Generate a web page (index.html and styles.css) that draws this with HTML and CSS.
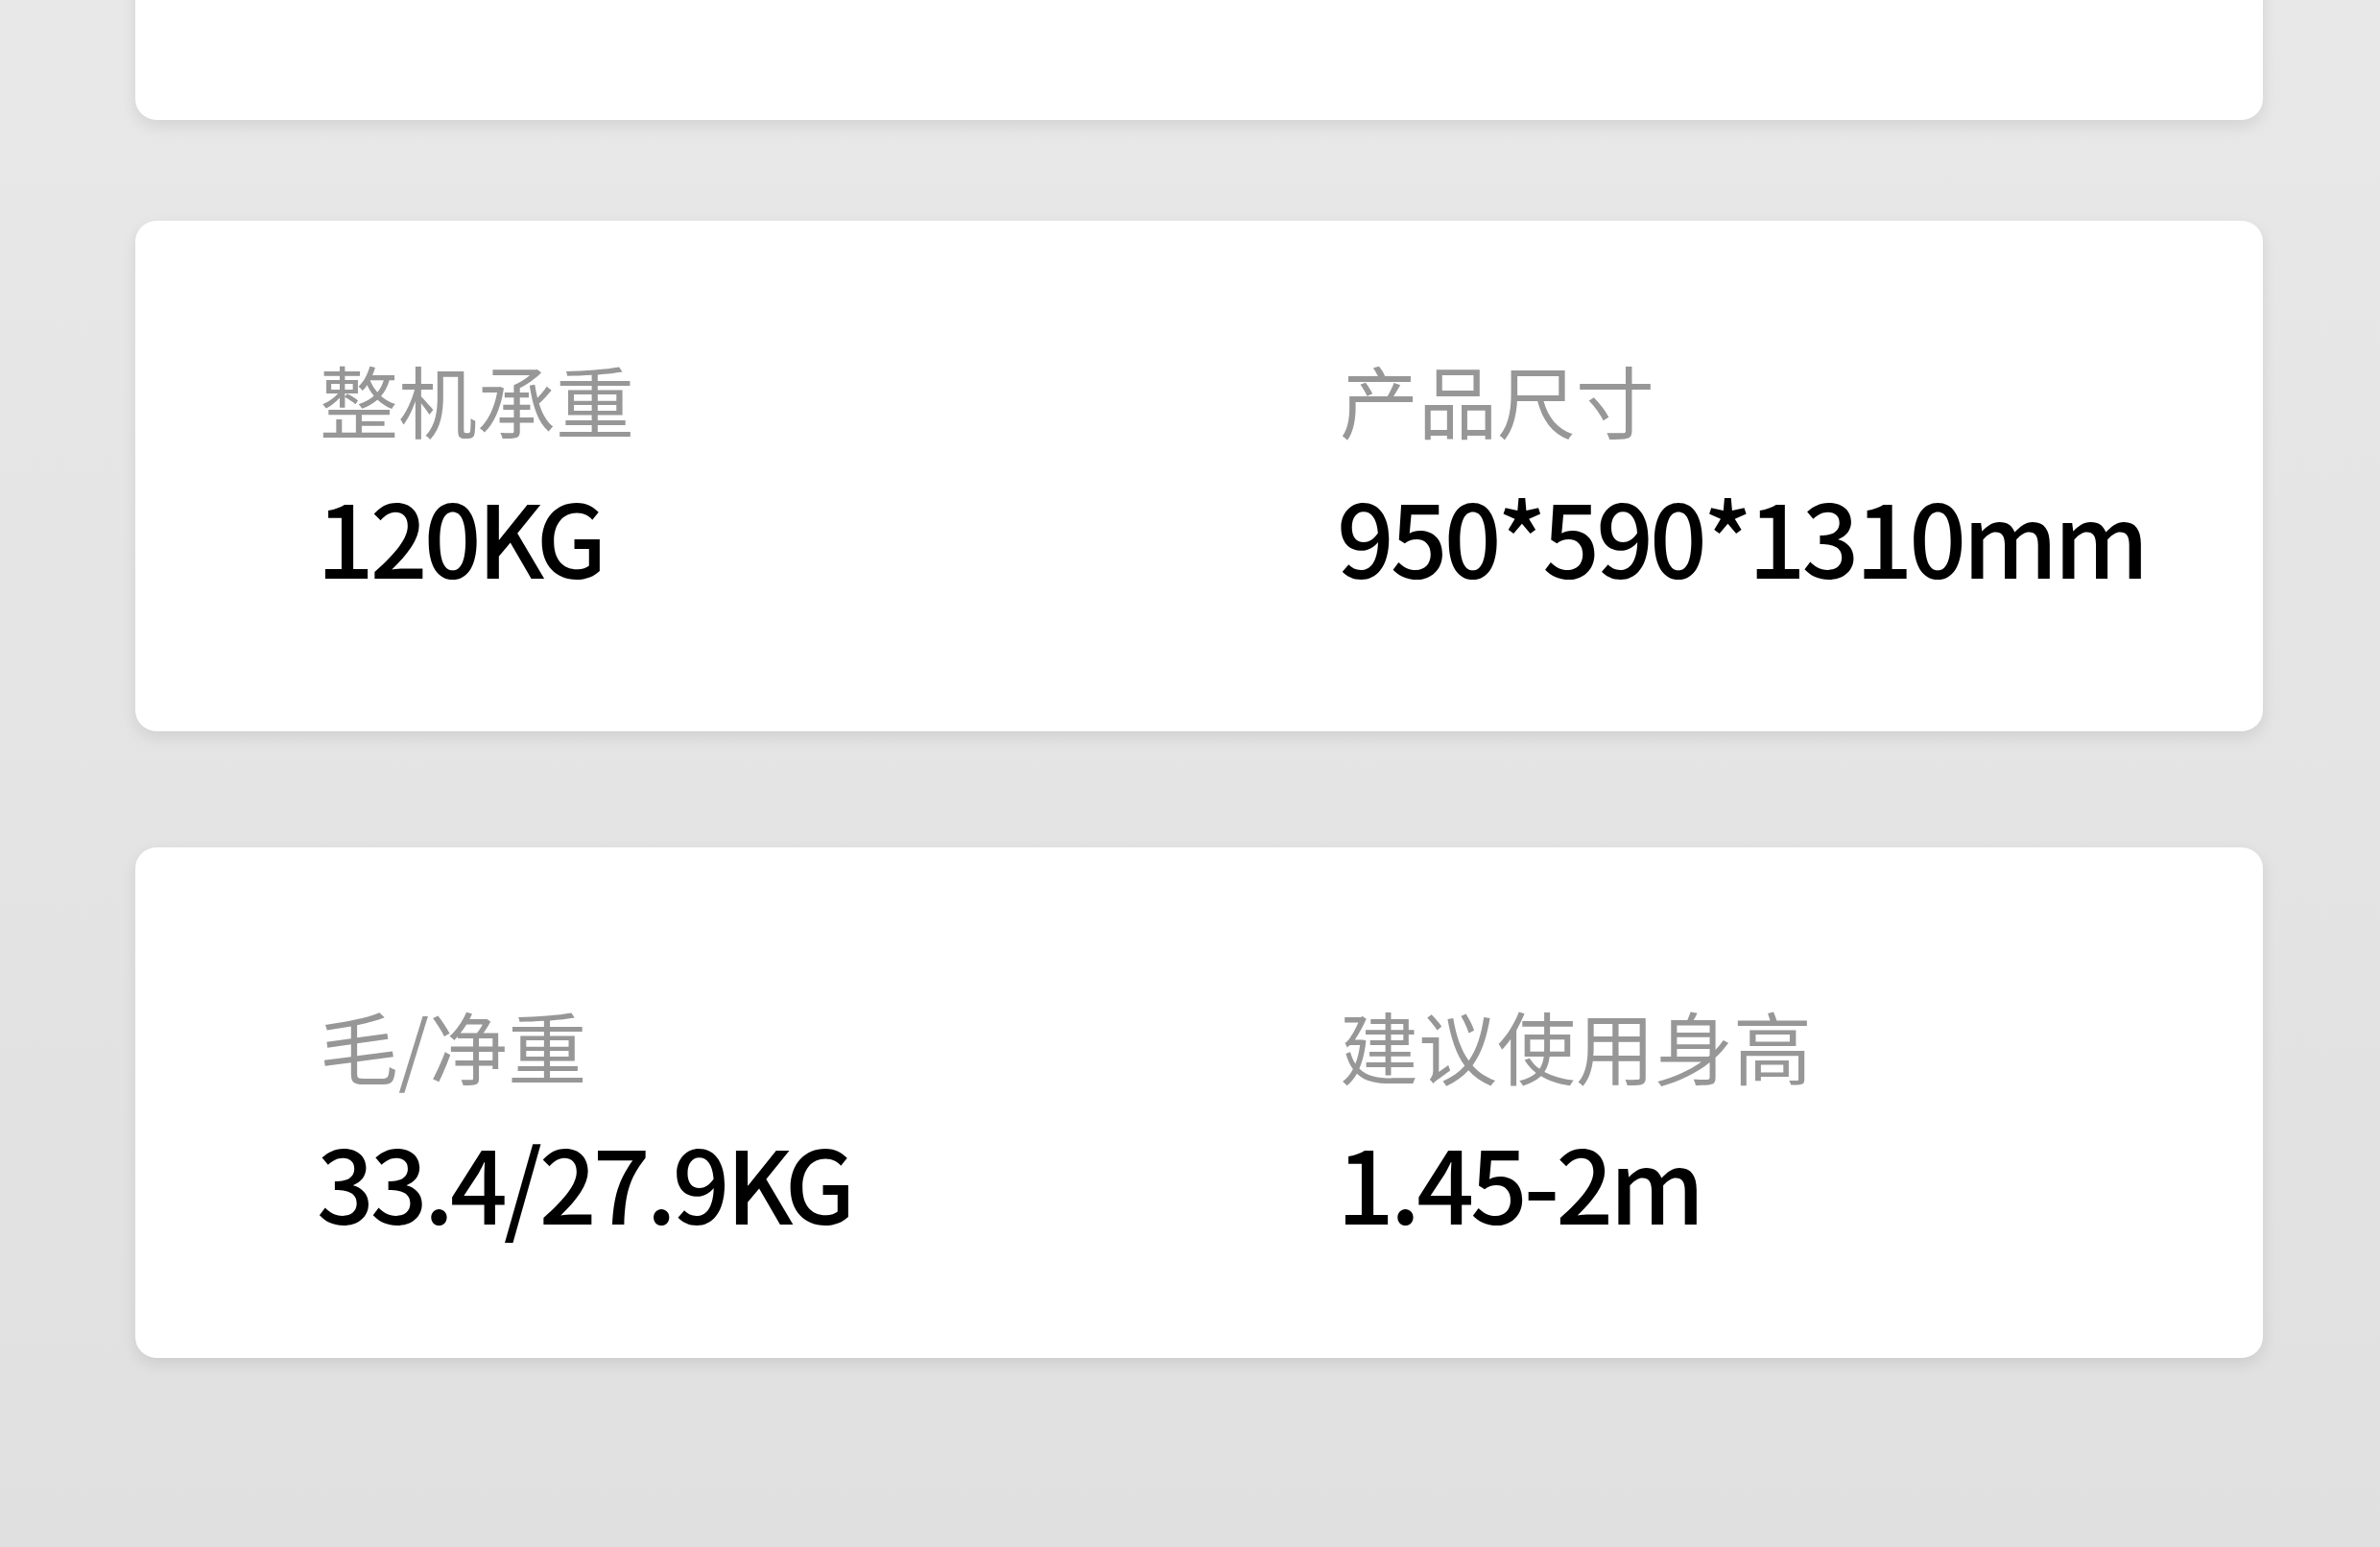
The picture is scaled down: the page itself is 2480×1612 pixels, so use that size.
FILE: index.html
```html
<!DOCTYPE html>
<html lang="zh-CN">
<head>
<meta charset="utf-8">
<title>产品参数</title>
<link rel="stylesheet" href="styles.css">
</head>
<body>
<main class="page">
  <section class="card card--top"></section>
  <section class="card card--mid">
    <div class="spec">
      <div class="spec-label">整机承重</div>
      <div class="spec-value">120<span class="unit">KG</span></div>
    </div>
    <div class="spec">
      <div class="spec-label">产品尺寸</div>
      <div class="spec-value">950*590*1310mm</div>
    </div>
  </section>
  <section class="card card--low">
    <div class="spec">
      <div class="spec-label">毛/净重</div>
      <div class="spec-value">33.4/27.9<span class="unit">KG</span></div>
    </div>
    <div class="spec">
      <div class="spec-label">建议使用身高</div>
      <div class="spec-value">1.45-2m</div>
    </div>
  </section>
</main>
</body>
</html>
```
FILE: styles.css
```css
html, body {
  margin: 0;
  padding: 0;
}
body {
  width: 2480px;
  height: 1612px;
  overflow: hidden;
  background: linear-gradient(180deg, #e8e8e8 0%, #e4e4e4 50%, #e0e0e0 100%);
  font-family: "Noto Sans CJK SC", "Noto Sans", sans-serif;
}
.page {
  padding: 0 122px 0 141px;
  display: flex;
  flex-direction: column;
}
.card {
  width: 2217px;
  height: 532px;
  box-sizing: border-box;
  background: #ffffff;
  border-radius: 22px;
  box-shadow: 0 6px 16px rgba(0, 0, 0, 0.09);
  display: grid;
  grid-template-columns: 1063px 1fr;
  padding: 0 0 0 192px;
  align-content: start;
}
.card--top {
  margin-top: -407px;
}
.card--mid {
  margin-top: 105px;
  padding-top: 145px;
}
.card--low {
  margin-top: 121px;
  padding-top: 165px;
}
.spec {
  display: flex;
  flex-direction: column;
  gap: 48px;
}
.spec-label {
  font-size: 82px;
  line-height: 82px;
  color: #979797;
  font-weight: 400;
}
.spec-value {
  margin-left: -3px;
  font-size: 105px;
  line-height: 105px;
  color: #000000;
  font-weight: 500;
  letter-spacing: -4px;
}
.unit {
  letter-spacing: -6px;
}
```
